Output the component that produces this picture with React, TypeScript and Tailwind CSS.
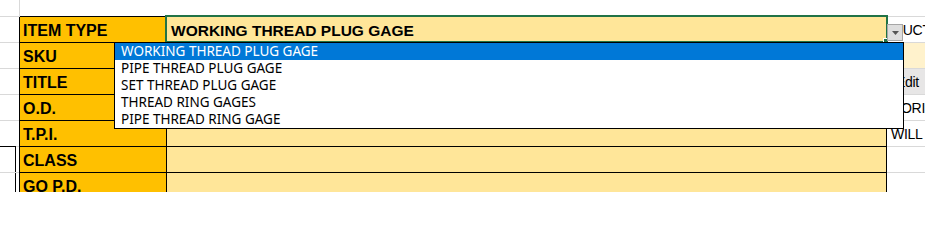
import React from "react";

type Row = {
  label: string;
  value?: string;
  right?: string;
  rightBg: string;
  rightPad: string;
  gutter: "plain" | "boxTop" | "boxSide";
};

const rows: Row[] = [
  { label: "ITEM TYPE", value: "WORKING THREAD PLUG GAGE", right: "DUCT", rightBg: "bg-white", rightPad: "pl-[6px]", gutter: "plain" },
  { label: "SKU", rightBg: "bg-[#FFF2CC]", rightPad: "pl-[4px]", gutter: "plain" },
  { label: "TITLE", right: "Edit", rightBg: "bg-[#E7E6E6]", rightPad: "pl-[9px]", gutter: "plain" },
  { label: "O.D.", right: "ORI", rightBg: "bg-white", rightPad: "pl-[14px]", gutter: "plain" },
  { label: "T.P.I.", right: "WILL", rightBg: "bg-white", rightPad: "pl-[4px]", gutter: "boxTop" },
  { label: "CLASS", rightBg: "bg-white", rightPad: "pl-[4px]", gutter: "boxSide" },
  { label: "GO P.D.", rightBg: "bg-white", rightPad: "pl-[4px]", gutter: "boxSide" },
];

const items = [
  "WORKING THREAD PLUG GAGE",
  "PIPE THREAD PLUG GAGE",
  "SET THREAD PLUG GAGE",
  "THREAD RING GAGES",
  "PIPE THREAD RING GAGE",
];

function Gutter({ kind }: { kind: Row["gutter"] }) {
  if (kind === "boxTop") {
    return (
      <div className="flex w-[19px] shrink-0">
        <div className="w-[16px] h-full border-b border-black" />
        <div className="flex-1 h-full border-b border-[#d9d9d9]" />
      </div>
    );
  }
  if (kind === "boxSide") {
    return (
      <div className="flex w-[19px] shrink-0 border-b border-[#d9d9d9]">
        <div className="w-[16px] h-full border-r border-black" />
        <div className="flex-1 h-full" />
      </div>
    );
  }
  return <div className="w-[19px] shrink-0 border-b border-[#d9d9d9]" />;
}

export default function App() {
  return (
    <div className="relative w-[925px] h-[226px] bg-white overflow-hidden font-['Liberation_Sans',Arial,sans-serif] text-black">
      <div className="h-[192px] overflow-hidden flex flex-col">
        {/* top row */}
        <div className="flex h-[17px] shrink-0">
          <div className="w-[20px] shrink-0 border-r border-b border-[#d9d9d9]" />
          <div className="w-[867px] shrink-0 border-b border-black" />
          <div className="w-[38px] shrink-0 border-b border-[#d9d9d9]" />
        </div>
        {rows.map((r) => (
          <div key={r.label} className="flex h-[26px] shrink-0">
            <Gutter kind={r.gutter} />
            <div className="w-[148px] shrink-0 border-l border-r border-b border-black bg-[#FFC000] flex items-center pl-[3px] pt-[2px] text-[16px] font-bold whitespace-nowrap overflow-hidden">
              {r.label}
            </div>
            <div className="w-[720px] shrink-0 border-r border-b border-black bg-[#FFE699] flex items-center pl-[4px] pt-[2px] text-[15.5px] font-bold whitespace-nowrap overflow-hidden">
              {r.value ?? ""}
            </div>
            <div
              className={`w-[38px] shrink-0 border-b border-[#d9d9d9] flex items-center pt-[1px] text-[14px] tracking-[-0.3px] whitespace-nowrap overflow-hidden ${r.rightBg} ${r.rightPad}`}
            >
              {r.right ?? ""}
            </div>
          </div>
        ))}
      </div>

      {/* selection border */}
      <div className="absolute left-[165px] top-[15px] w-[723px] h-[28px] border-2 border-[#217346]" />
      <div className="absolute left-[883px] top-[38px] w-[6px] h-[6px] bg-[#217346] border border-white" />

      {/* dropdown arrow button */}
      <div className="absolute left-[887px] top-[24px] w-[16px] h-[17px] bg-[#DEDEDE] border border-[#A6A6A6] flex items-center justify-center">
        <svg width="7" height="4" viewBox="0 0 7 4">
          <path d="M0 0 H7 L3.5 4 Z" fill="#555555" />
        </svg>
      </div>

      {/* dropdown list */}
      <div className="absolute left-[114px] top-[42px] w-[790px] h-[87px] border border-black bg-white font-['Noto_Sans',sans-serif] text-[13.5px]">
        {items.map((it, i) => (
          <div
            key={it}
            className={`h-[17px] flex items-center pl-[6px] whitespace-nowrap ${i === 0 ? "bg-[#0078D7] text-white" : "text-black"}`}
          >
            {it}
          </div>
        ))}
      </div>
    </div>
  );
}
